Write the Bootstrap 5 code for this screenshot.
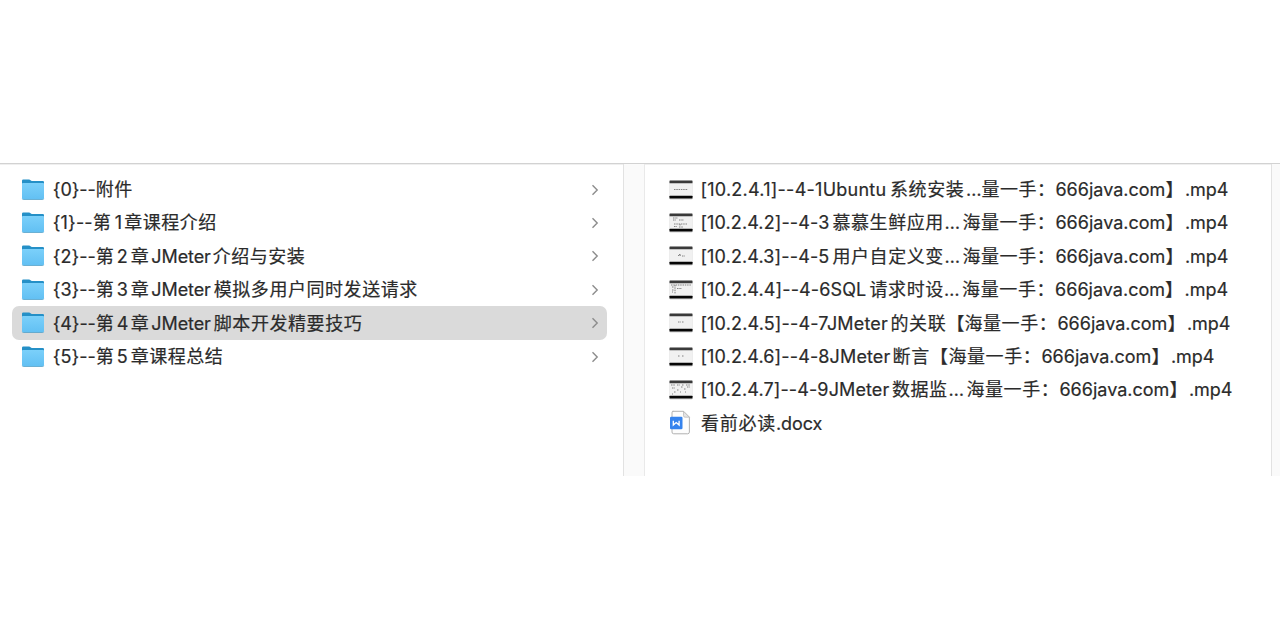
<!DOCTYPE html>
<html lang="zh-CN">
<head>
  <meta charset="UTF-8">
  <title>JMeter</title>
  <link href="https://cdn.jsdelivr.net/npm/bootstrap@5.3.0/dist/css/bootstrap.min.css" rel="stylesheet">
  <style>
    body {
      padding-top: 163px;
      background-color: #fff;
      color: #2b2b2b;
      font-family: Inter, "Noto Sans CJK SC", sans-serif;
      font-size: 18px;
    }
    .browser {
      height: 313px;
      border-top: 1px solid #d2d2d2;
      box-shadow: inset 0 1px 0 #efefef;
    }
    .pane-folders {
      width: 623px;
      padding: 8.9px 16px 0 12px;
    }
    .pane-files {
      width: 626px;
      padding: 8.9px 0 0 15px;
    }
    .gutter {
      width: 22px;
      background-color: #fafafa;
      border-left: 1px solid #e2e2e2;
      border-right: 1px solid #e9e9e9;
    }
    .gutter-end {
      width: 9px;
      border-right: 0;
    }
    .entry {
      height: 33.4px;
      padding: 0 8.500px 0 9.400px;
      border-radius: 7px;
    }
    .entry.selected {
      background-color: #dadada;
    }
    .entry svg {
      display: block;
      flex-shrink: 0;
    }
    .entry-icon {
      margin-right: 7.400px;
    }
    .pane-files .entry-icon {
      margin-right: 7px;
    }
    .entry-name {
      white-space: pre;
      line-height: 33px;
      -webkit-text-stroke: .2px #2b2b2b;
    }
    .entry-name span {
      flex-shrink: 0;
    }
  </style>
</head>
<body onload="initHalaman()">

  <!-- Icons -->
  <svg width="0" height="0" class="position-absolute">
    <defs>
      <linearGradient id="folderFront" x1="0" y1="0" x2="0" y2="1">
        <stop offset="0" stop-color="#7bd0fa"/>
        <stop offset="1" stop-color="#62c0f3"/>
      </linearGradient>
      <symbol id="folder" viewBox="0 0 24 24">
        <path d="M1 2.700Q1 1.500 2.200 1.500H8q.9 0 1.500.7l.4.4q.3.300.9.300H21.800Q23 2.900 23 4.100V12H1z" fill="#2590c7"/>
        <path d="M1 5.700Q1 4.900 1.800 4.900H22.200Q23 4.900 23 5.700V20Q23 21.200 21.800 21.200H2.200Q1 21.200 1 20z" fill="url(#folderFront)"/>
        <path d="M1.200 20.900Q1.500 21.500 2.400 21.500H21.600Q22.500 21.500 22.800 20.900" fill="none" stroke="#4f9fc8" stroke-width=".8"/>
      </symbol>
      <symbol id="video" viewBox="0 0 24 20">
        <rect x=".5" y="1" width="23" height="18.500" rx="1" fill="#000" opacity=".18"/>
        <rect x=".5" y=".5" width="23" height="18" rx=".6" fill="#f1f1f1"/>
        <rect x=".5" y=".5" width="23" height="2.700" rx=".5" fill="#3a3a3a"/>
        <rect x=".5" y="15.700" width="23" height="2.800" rx=".5" fill="#050505"/>
      </symbol>
      <symbol id="doc" viewBox="0 0 24 26">
        <path d="M3.700 1.300H14.500L20.400 7.200V22Q20.400 23.800 18.600 23.800H4.700Q3 23.800 3 22V2.800Q3 1.300 4.200 1.300z" fill="#fdfdfd" stroke="#a9a9a9" stroke-width=".9"/>
        <path d="M14.500 1.300V5.700Q14.500 7.200 16 7.200H20.400z" fill="#e4e4e4" stroke="#b5b5b5" stroke-width=".7"/>
        <rect x="1" y="6.800" width="12.500" height="12.500" rx="1.300" fill="#3583ee"/>
        <path d="M4.300 10.800V15L7.200 12.500 10.100 15V10.800" fill="none" stroke="#fff" stroke-width="1.300"/>
      </symbol>
      <symbol id="chevron" viewBox="0 0 8 12">
        <path d="M1.500 1.300L6.200 6L1.500 10.700" fill="none" stroke="#8c8c8c" stroke-width="1.400"/>
      </symbol>
    </defs>
  </svg>

  <!-- Columns -->
  <div class="browser d-flex">
    <div class="pane-folders flex-shrink-0" id="folders"></div>
    <div class="gutter flex-shrink-0"></div>
    <div class="pane-files flex-shrink-0" id="files"></div>
    <div class="gutter gutter-end flex-shrink-0"></div>
  </div>

  <script src="https://cdn.jsdelivr.net/npm/bootstrap@5.3.0/dist/js/bootstrap.bundle.min.js"></script>
  <script>
    // Each name is a list of runs: [text, start, end], measured from the start of the name
    const folders = [
      [["{0}--", 0, 43], ["附件", 43, 80]],
      [["{1}--", 0, 40], ["第", 40, 58], ["1", 62, 69], ["章课程介绍", 71.5, 164]],
      [["{2}--", 0, 43], ["第", 43, 61], ["2", 64, 75.5], ["章", 78, 96], ["JMeter", 98.5, 158], ["介绍与安装", 160, 252.5]],
      [["{3}--", 0, 43], ["第", 43, 61], ["3", 64, 75.5], ["章", 78, 96], ["JMeter", 98.5, 158], ["模拟多用户同时发送请求", 161, 365]],
      [["{4}--", 0, 43], ["第", 43, 61], ["4", 64, 75.5], ["章", 78, 96], ["JMeter", 98.5, 158], ["脚本开发精要技巧", 161, 309.5]],
      [["{5}--", 0, 43], ["第", 43, 61], ["5", 64, 75.5], ["章课程总结", 78, 170.5]]
    ];
    const selected = 4;

    // End of a shortened name, shifted by x
    function ekor(x) {
      return [["…", 244 + x, 261.5 + x], ["海量一手：", 262 + x, 355 + x], ["666java.com", 355 + x, 465 + x], ["】", 465 + x, 483.5 + x], [".mp4", 484.5 + x, 528 + x]];
    }

    const files = [
      { icon: "video", marks: "M5 9.500h14", name: [["[10.2.4.1]--4-1Ubuntu", 0, 186], ["系统安装", 189.5, 264], ["…", 265.5, 281], ["量一手：", 281, 355], ["666java.com", 355, 465], ["】", 465, 483.5], [".mp4", 484.5, 528]] },
      { icon: "video", marks: "M4 5h5M4 7h3M10 7h5M5 11h13M5 13.500h3M10 14h4M11 11v2", name: [["[10.2.4.2]--4-3", 0, 129], ["慕慕生鲜应用", 132, 243.5], ...ekor(0)] },
      { icon: "video", marks: "M9 9.500h3M13 10h3M10 8.500h2", name: [["[10.2.4.3]--4-5", 0, 129], ["用户自定义变", 132, 243.5], ...ekor(0)] },
      { icon: "video", marks: "M2 5h20M3 7h2M3 10h2M6 5v9M8 8.500h5M3 12h1", name: [["[10.2.4.4]--4-6SQL", 0, 166], ["请求时设", 169, 243.5], ...ekor(-.3)] },
      { icon: "video", marks: "M9 9h3M13 9h2", name: [["[10.2.4.5]--4-7JMeter", 0, 187.5], ["的关联", 190, 246], ["【", 246, 264], ...ekor(2).slice(1)] },
      { icon: "video", marks: "M9 9h2M13 9h2", name: [["[10.2.4.6]--4-8JMeter", 0, 190], ["断言", 192, 229.5], ["【", 229.5, 248], ...ekor(-14).slice(1)] },
      { icon: "video", marks: "M2 5h4M8 5h3M13 5h2M17 5h4M3 8h3M8 10h2M12 7h2M15 9h2M18 7h3M5 12h2M11 12h1M3 14h1M16 12h1", name: [["[10.2.4.7]--4-9JMeter", 0, 189], ["数据监", 191.5, 247], ...ekor(4)] },
      { icon: "doc", name: [["看前必读", 0.5, 75.5], [".docx", 75.5, 122]] }
    ];

    function buatNama(runs) {
      const nama = document.createElement("div");
      nama.className = "entry-name d-flex";
      let posisi = 0;
      for (const [teks, awal, akhir] of runs) {
        const span = document.createElement("span");
        span.innerText = teks;
        span.style.marginLeft = (awal - posisi) + "px";
        span.dataset.lebar = akhir - awal;
        nama.appendChild(span);
        posisi = akhir;
      }
      return nama;
    }

    // Spread the letters so that a run fills its width
    function aturSpasi() {
      document.querySelectorAll(".entry-name span").forEach(span => {
        const asli = span.getBoundingClientRect().width;
        span.style.letterSpacing = (span.dataset.lebar - asli) / [...span.innerText].length + "px";
      });
    }

    function tampilkanFolder() {
      const daftar = document.getElementById("folders");
      folders.forEach((runs, i) => {
        const baris = document.createElement("div");
        baris.className = "entry d-flex align-items-center" + (i === selected ? " selected" : "");
        baris.innerHTML = `<svg width="24" height="24" class="entry-icon"><use href="#folder"/></svg>`;
        baris.appendChild(buatNama(runs));
        baris.insertAdjacentHTML("beforeend", `<svg width="8" height="12" class="ms-auto"><use href="#chevron"/></svg>`);
        daftar.appendChild(baris);
      });
    }

    function tampilkanFile() {
      const daftar = document.getElementById("files");
      for (const f of files) {
        const baris = document.createElement("div");
        baris.className = "entry d-flex align-items-center pe-0";
        if (f.icon === "doc") {
          baris.innerHTML = `<svg width="24" height="26" class="entry-icon"><use href="#doc"/></svg>`;
        } else {
          baris.innerHTML = `<svg width="24" height="20" class="entry-icon"><use href="#video"/><path d="${f.marks}" fill="none" stroke="#777" stroke-width=".9" stroke-dasharray="1.500 .8"/></svg>`;
        }
        baris.appendChild(buatNama(f.name));
        daftar.appendChild(baris);
      }
    }

    function initHalaman() {
      tampilkanFolder();
      tampilkanFile();
      aturSpasi();
    }
  </script>
</body>
</html>
